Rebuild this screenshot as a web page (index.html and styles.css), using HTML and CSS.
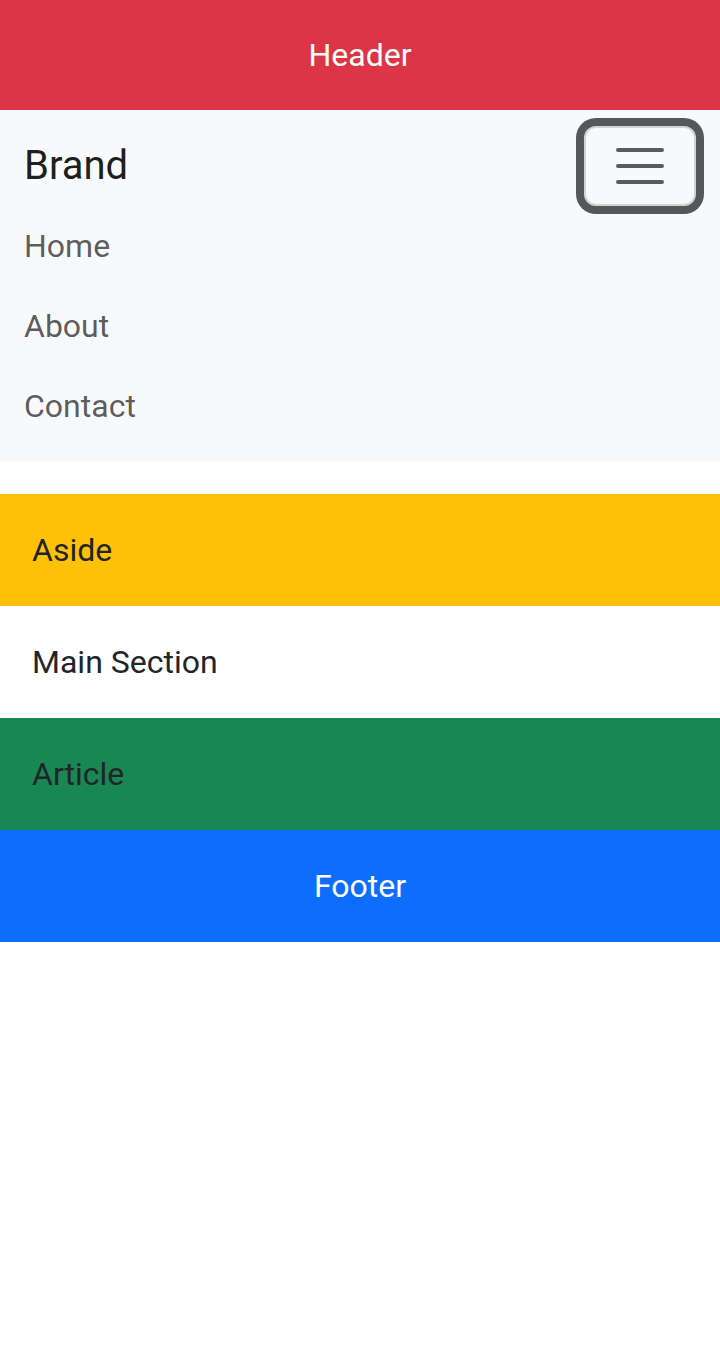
FILE: index.html
```html
<!DOCTYPE html>
<html lang="en">
<head>
<meta charset="utf-8">
<title>Layout</title>
<link rel="stylesheet" href="styles.css">
</head>
<body>
<header class="site-header">Header</header>
<nav class="navbar">
  <div class="navbar-row">
    <a class="brand" href="#">Brand</a>
    <button class="toggler" type="button" aria-label="Toggle navigation">
      <svg class="toggler-icon" viewBox="0 0 30 30" width="60" height="60" aria-hidden="true">
        <path d="M4 7h22M4 15h22M4 23h22" stroke="rgba(33,37,41,0.75)" stroke-width="2" stroke-linecap="round" fill="none"/>
      </svg>
    </button>
  </div>
  <ul class="nav-list">
    <li><a class="nav-link" href="#">Home</a></li>
    <li><a class="nav-link" href="#">About</a></li>
    <li><a class="nav-link" href="#">Contact</a></li>
  </ul>
</nav>
<div class="content">
  <aside class="block aside">Aside</aside>
  <section class="block main">Main Section</section>
  <article class="block article">Article</article>
  <footer class="block footer">Footer</footer>
</div>
</body>
</html>
```
FILE: styles.css
```css
* { box-sizing: border-box; }
html, body { margin: 0; padding: 0; }
body {
  font-family: Roboto, "Liberation Sans", sans-serif;
  font-size: 32px;
  line-height: 1.5;
  color: #212529;
  background: #fff;
}
.site-header {
  background: #dc3545;
  color: #fff;
  text-align: center;
  padding: 31px 32px;
}
.navbar {
  background: #f8f9fa;
  padding: 16px 24px;
}
.navbar-row {
  display: flex;
  justify-content: space-between;
  align-items: center;
}
.brand {
  font-size: 40px;
  line-height: 1.5;
  padding: 10px 0;
  color: rgba(0,0,0,0.9);
  text-decoration: none;
}
.toggler {
  display: flex;
  align-items: center;
  justify-content: center;
  padding: 8px 24px;
  background: transparent;
  border: 2px solid rgba(0,0,0,0.15);
  border-radius: 12px;
  box-shadow: 0 0 0 8px #555759;
  line-height: 1;
}
.toggler-icon { display: block; }
.nav-list {
  list-style: none;
  margin: 0;
  padding: 0;
}
.nav-link {
  display: block;
  padding: 16px 0;
  color: rgba(0,0,0,0.65);
  text-decoration: none;
}
.content { margin-top: 32px; }
.block { padding: 32px; }
.aside { background: #ffc107; }
.main { background: #fff; }
.article { background: #198754; }
.footer {
  background: #0d6efd;
  color: #fff;
  text-align: center;
}
```
